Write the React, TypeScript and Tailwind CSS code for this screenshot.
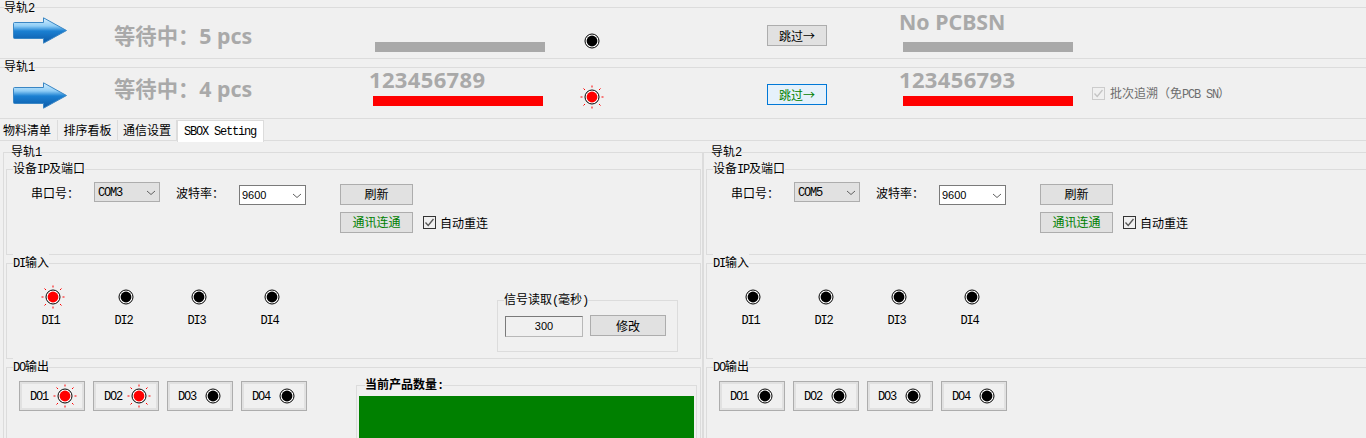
import React from "react";

const LINE = "border-[#dcdcdc]";

// SimSun-like mix: CJK at 12px, latin runs squeezed to 6px per char
const T = ({ children }: { children: string }) => (
  <>
    {children.split(/([\x20-\x7e]+)/).map((part, i) =>
      /^[\x20-\x7e]+$/.test(part) ? (
        <span key={i} className="font-['Liberation_Mono',monospace] tracking-[-1.2px] whitespace-pre">
          {part}
        </span>
      ) : (
        <span key={i}>{part}</span>
      )
    )}
  </>
);

const Legend = ({ label, className = "" }: { label: string; className?: string }) => (
  <span className={`absolute -top-[10px] h-[16px] bg-[#f0f0f0] leading-[16px] whitespace-nowrap ${className}`}>
    <T>{label}</T>
  </span>
);

const TrackLegend = ({ label, className = "" }: { label: string; className?: string }) => (
  <span className={`absolute left-[4px] h-[12px] bg-[#f0f0f0] leading-[12px] whitespace-nowrap ${className}`}>
    <T>{label}</T>
  </span>
);

const Arrow = ({ id, className = "" }: { id: string; className?: string }) => (
  <svg width="54" height="27" viewBox="0 0 54 27" className={`shrink-0 ${className}`}>
    <defs>
      <linearGradient id={id} x1="0" y1="0" x2="0" y2="1">
        <stop offset="0" stopColor="#d8f0fe" />
        <stop offset="0.32" stopColor="#8fcdf6" />
        <stop offset="0.52" stopColor="#1b80d2" />
        <stop offset="1" stopColor="#0a58a6" />
      </linearGradient>
    </defs>
    <path
      d="M1.5 5.5H30.5V.8L53.5 13.5L30.5 26.2V21.5H1.5Q.5 21.5 .5 20.5V6.5Q.5 5.5 1.5 5.5Z"
      fill={`url(#${id})`}
      stroke="#3a86c4"
    />
  </svg>
);

const Led = ({ on = false, className = "" }: { on?: boolean; className?: string }) => (
  <svg width="24" height="24" viewBox="0 0 24 24" className={`shrink-0 ${className}`}>
    {on && (
      <path
        d="M12 .5V2.5M12 21.5V23.5M.5 12H2.5M21.5 12H23.5M3.5 3.5L5 5M19 19L20.5 20.5M20.5 3.5L19 5M5 19L3.5 20.5"
        stroke="#ff0000"
        strokeWidth="1"
        fill="none"
      />
    )}
    <circle cx="12" cy="12" r="7" fill="#fff" stroke="#000" strokeWidth="1" />
    <circle cx="12" cy="12" r="5.4" fill={on ? "#ff0000" : "#000"} />
  </svg>
);

const Bar = ({ red = false, className = "" }: { red?: boolean; className?: string }) => (
  <div className={`h-[10px] w-[170px] ${red ? "bg-[#ff0000]" : "bg-[#a9a9a9]"} ${className}`} />
);

const BigText = ({ children, className = "" }: { children: React.ReactNode; className?: string }) => (
  <div
    className={`font-['Noto_Sans','Noto_Sans_CJK_SC',sans-serif] font-bold leading-[20px] text-[#a9a9a9] whitespace-nowrap ${className}`}
  >
    {children}
  </div>
);

const Waiting = ({ count, className = "" }: { count: number; className?: string }) => (
  <BigText className={`w-[256px] shrink-0 text-[21.33px] ${className}`}>等待中：{count} pcs</BigText>
);

const Serial = ({ children, className = "" }: { children: string; className?: string }) => (
  <BigText className={`-ml-px text-[22px] tracking-[0.35px] ${className}`}>{children}</BigText>
);

const Button = ({
  label,
  active = false,
  className = "",
}: {
  label: string;
  active?: boolean;
  className?: string;
}) => (
  <div
    className={`flex h-[21px] shrink-0 items-center justify-center border leading-none ${
      active ? "border-[#0078d7] bg-[#e5f1fb]" : "border-[#adadad] bg-[#e1e1e1]"
    } ${className}`}
  >
    <T>{label}</T>
  </div>
);

const Chevron = () => (
  <svg width="10" height="6" viewBox="0 0 10 6" className="absolute right-[3px] top-[7px]">
    <path d="M1 1L5 4.5L9 1" fill="none" stroke="#606060" strokeWidth="1" />
  </svg>
);

const Check = ({ stroke, className = "" }: { stroke: string; className?: string }) => (
  <div className={`flex h-[13px] w-[13px] shrink-0 items-center justify-center border bg-[#f0f0f0] ${className}`}>
    <svg width="11" height="11" viewBox="0 0 11 11">
      <path d="M1.5 5.5L4.2 8.5L9.5 2" fill="none" stroke={stroke} strokeWidth="1.3" />
    </svg>
  </div>
);

const RailPanel = ({
  rail,
  port,
  diOn,
  doOn,
  extras = false,
}: {
  rail: string;
  port: string;
  diOn: boolean;
  doOn: boolean;
  extras?: boolean;
}) => (
  <div className={`relative h-[330px] w-[700px] shrink-0 border ${LINE} pl-[2px] pt-[16px]`}>
    <Legend label={rail} className="left-[7px]" />
    <div className="flex w-[695px] flex-col gap-[8px]">
      {/* device / port */}
      <div className={`relative flex h-[86px] border ${LINE}`}>
        <Legend label="设备IP及端口" className="left-[6px]" />
        <div className="ml-[24px] mt-[15px] w-[63px] shrink-0 leading-[16px]">串口号：</div>
        <div className="relative mt-[12px] h-[20px] w-[66px] shrink-0 border border-[#adadad] bg-[#e1e1e1] pl-[3px] leading-[16px]">
          <T>{port}</T>
          <Chevron />
        </div>
        <div className="ml-[16px] mt-[15px] w-[63px] shrink-0 leading-[16px]">波特率：</div>
        <div className="relative mt-[15px] h-[20px] w-[67px] shrink-0 border border-[#7a7a7a] bg-white pl-[2px] font-['Liberation_Sans',sans-serif] text-[11px] leading-[18px]">
          9600
          <Chevron />
        </div>
        <div className="ml-[34px] mt-[14px] flex flex-col gap-[7px]">
          <Button label="刷新" className="w-[73px] pb-[2px]" />
          <div className="flex items-center">
            <Button label="通讯连通" className="w-[73px] pb-[2px] text-[#008000]" />
            <Check stroke="#555" className="ml-[10px] border-[#333]" />
            <span className="ml-[4px]">自动重连</span>
          </div>
        </div>
      </div>

      {/* digital inputs */}
      <div className={`relative flex h-[96px] border ${LINE} pl-[7px]`}>
        <Legend label="DI输入" className="left-[6px]" />
        {["DI1", "DI2", "DI3", "DI4"].map((name, i) => (
          <div key={name} className="mt-[21px] flex w-[73px] shrink-0 flex-col items-center">
            <Led on={diOn && i === 0} className="ml-[4px]" />
            <div className="mt-[2px] leading-[16px]">
              <T>{name}</T>
            </div>
          </div>
        ))}
        {extras && (
          <div className={`relative ml-[191px] mt-[36px] flex h-[52px] w-[181px] shrink-0 border ${LINE}`}>
            <Legend label="信号读取(毫秒)" className="left-[6px]" />
            <div className="ml-[7px] mt-[15px] flex h-[21px] w-[78px] shrink-0 items-center justify-center border border-[#7a7a7a] border-b-[#b8b8b8] border-r-[#b8b8b8] font-['Liberation_Sans',sans-serif] text-[11px]">
              300
            </div>
            <Button label="修改" className="ml-[7px] mt-[14px] w-[76px]" />
          </div>
        )}
      </div>

      {/* digital outputs */}
      <div className={`relative flex h-[100px] border ${LINE} pl-[12px] pt-[13px]`}>
        <Legend label="DO输出" className="left-[6px]" />
        <div className="flex gap-[8px]">
          {["DO1", "DO2", "DO3", "DO4"].map((name, i) => (
            <div key={name} className="h-[30px] w-[66px] shrink-0 border border-[#adadad]">
              <div className="flex h-full items-center border-2 border-[#e1e1e1] pl-[8px]">
                <span className="w-[23px]">
                  <T>{name}</T>
                </span>
                <Led on={doOn && i < 2} />
              </div>
            </div>
          ))}
        </div>
        {extras && (
          <div className={`relative ml-[49px] mt-[4px] h-[80px] w-[341px] shrink-0 border ${LINE} pl-[2px] pt-[10px]`}>
            <Legend label="当前产品数量:" className="left-[8px] font-bold" />
            <div className="h-[60px] w-[335px] bg-[#008000]" />
          </div>
        )}
      </div>
    </div>
  </div>
);

const App = () => {
  return (
    <div className="h-[438px] w-[1366px] overflow-hidden bg-[#f0f0f0] pt-[7px] font-['Noto_Sans_CJK_SC',sans-serif] text-[12px] text-black">
      {/* rail 2 */}
      <div className={`relative flex h-[52px] border-y ${LINE}`}>
        <TrackLegend label="导轨2" className="-top-[7px]" />
        <Arrow id="arrow-2" className="ml-[13px] mt-[9px]" />
        <Waiting count={5} className="ml-[47px] mt-[18px]" />
        <div className="w-[210px] shrink-0">
          <Bar className="ml-[5px] mt-[34px]" />
        </div>
        <Led className="mt-[21px]" />
        <Button label="跳过→" className="ml-[163px] mt-[17px] w-[60px]" />
        <div className="ml-[73px] shrink-0">
          <BigText className="-ml-px mt-[4px] text-[21.33px]">No PCBSN</BigText>
          <Bar className="ml-[3px] mt-[10px]" />
        </div>
      </div>

      {/* rail 1 */}
      <div className={`relative mt-[8px] flex h-[52px] border-y ${LINE}`}>
        <TrackLegend label="导轨1" className="-top-[8px]" />
        <Arrow id="arrow-1" className="ml-[13px] mt-[14px]" />
        <Waiting count={4} className="ml-[47px] mt-[11px]" />
        <div className="w-[210px] shrink-0">
          <Serial className="mt-[1px]">123456789</Serial>
          <Bar red className="ml-[3px] mt-[7px]" />
        </div>
        <Led on className="mt-[17px]" />
        <Button label="跳过→" active className="ml-[163px] mt-[16px] w-[60px] text-[#008000]" />
        <div className="ml-[73px] w-[192px] shrink-0">
          <Serial className="mt-[1px]">123456793</Serial>
          <Bar red className="ml-[3px] mt-[7px]" />
        </div>
        <Check stroke="#c4c4c4" className="mt-[19px] border-[#cccccc]" />
        <span className="ml-[5px] mt-[17px] h-[16px] leading-[16px] text-[#6d6d6d]">
          <T>批次追溯（免PCB SN）</T>
        </span>
      </div>

      {/* tabs */}
      <div className={`mt-px flex h-[21px] border-b ${LINE}`}>
        <div className={`flex w-[58px] items-center border-r pl-[3px] ${LINE}`}>物料清单</div>
        <div className={`flex w-[60px] items-center justify-center border-r ${LINE}`}>排序看板</div>
        <div className={`flex w-[59px] items-center justify-center border-r ${LINE}`}>通信设置</div>
        <div className={`flex h-[22px] w-[87px] items-center border-x border-t pl-[6px] ${LINE} bg-white`}>
          <T>SBOX Setting</T>
        </div>
      </div>

      {/* tab content */}
      <div className="mt-[11px] flex pl-[3px]">
        <RailPanel rail="导轨1" port="COM3" diOn doOn extras />
        <RailPanel rail="导轨2" port="COM5" diOn={false} doOn={false} />
      </div>
    </div>
  );
};

export default App;
